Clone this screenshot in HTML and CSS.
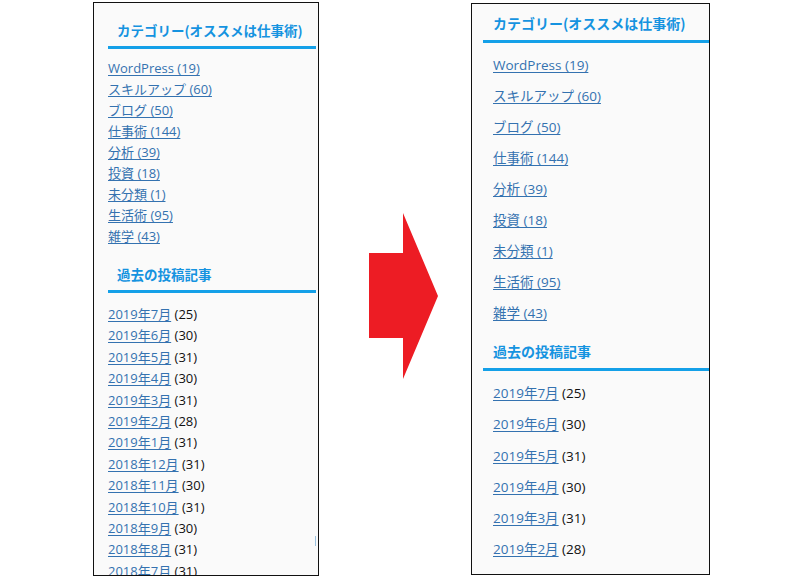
FILE: index.html
```html
<!DOCTYPE html>
<html lang="ja">
<head>
<meta charset="utf-8">
<link rel="stylesheet" href="styles.css">
</head>
<body>
<div class="stage">
  <aside class="panel panel-small">
    <h2 class="wtitle">カテゴリー(オススメは仕事術)</h2>
    <ul class="cats">
      <li><a href="#">WordPress (19)</a></li>
      <li><a href="#">スキルアップ (60)</a></li>
      <li><a href="#">ブログ (50)</a></li>
      <li><a href="#">仕事術 (144)</a></li>
      <li><a href="#">分析 (39)</a></li>
      <li><a href="#">投資 (18)</a></li>
      <li><a href="#">未分類 (1)</a></li>
      <li><a href="#">生活術 (95)</a></li>
      <li><a href="#">雑学 (43)</a></li>
    </ul>
    <h2 class="wtitle">過去の投稿記事</h2>
    <ul class="archives">
      <li><a href="#">2019年7月</a> (25)</li>
      <li><a href="#">2019年6月</a> (30)</li>
      <li><a href="#">2019年5月</a> (31)</li>
      <li><a href="#">2019年4月</a> (30)</li>
      <li><a href="#">2019年3月</a> (31)</li>
      <li><a href="#">2019年2月</a> (28)</li>
      <li><a href="#">2019年1月</a> (31)</li>
      <li><a href="#">2018年12月</a> (31)</li>
      <li><a href="#">2018年11月</a> (30)</li>
      <li><a href="#">2018年10月</a> (31)</li>
      <li><a href="#">2018年9月</a> (30)</li>
      <li><a href="#">2018年8月</a> (31)</li>
      <li><a href="#">2018年7月</a> (31)</li>
    </ul>
    <span class="scrollmark"></span>
  </aside>

  <svg class="arrow" width="70" height="168" viewBox="369 212 70 168">
    <polygon points="369,253 403,253 403,213 438,296 403,379 403,338 369,338" fill="#ed1c24"/>
  </svg>

  <aside class="panel panel-large">
    <h2 class="wtitle">カテゴリー(オススメは仕事術)</h2>
    <ul class="cats">
      <li><a href="#">WordPress (19)</a></li>
      <li><a href="#">スキルアップ (60)</a></li>
      <li><a href="#">ブログ (50)</a></li>
      <li><a href="#">仕事術 (144)</a></li>
      <li><a href="#">分析 (39)</a></li>
      <li><a href="#">投資 (18)</a></li>
      <li><a href="#">未分類 (1)</a></li>
      <li><a href="#">生活術 (95)</a></li>
      <li><a href="#">雑学 (43)</a></li>
    </ul>
    <h2 class="wtitle">過去の投稿記事</h2>
    <ul class="archives">
      <li><a href="#">2019年7月</a> (25)</li>
      <li><a href="#">2019年6月</a> (30)</li>
      <li><a href="#">2019年5月</a> (31)</li>
      <li><a href="#">2019年4月</a> (30)</li>
      <li><a href="#">2019年3月</a> (31)</li>
      <li><a href="#">2019年2月</a> (28)</li>
    </ul>
  </aside>
</div>
</body>
</html>
```

FILE: styles.css
```css
html, body {
  margin: 0;
  padding: 0;
  background: #ffffff;
}

body {
  width: 810px;
  height: 576px;
  overflow: hidden;
  font-family: "Open Sans", "Noto Sans CJK JP", sans-serif;
  color: #111111;
}

.stage {
  display: flex;
  align-items: flex-start;
}

.panel {
  position: relative;
  box-sizing: border-box;
  background: #fafafa;
  border: 1px solid #111;
  overflow: hidden;
}

.wtitle {
  margin: 0;
  font-family: "Noto Sans CJK JP", sans-serif;
  font-weight: 700;
  color: #1593e0;
  border-bottom: 3px solid #14a0e8;
  white-space: nowrap;
}

ul {
  list-style: none;
  margin: 0;
  padding: 0;
}

li {
  white-space: nowrap;
}

a {
  color: #3472b0;
  text-decoration: underline;
  text-underline-offset: 2px;
}

.cats a,
.archives a {
  font-family: "Open Sans", "Noto Sans CJK JP", sans-serif;
}

/* ---------- left (small) panel ---------- */
.panel-small {
  width: 226px;
  height: 574px;
  margin: 2px 0 0 93px;
  padding: 17px 2px 0 14px;
  font-size: 13px;
}

.panel-small .wtitle {
  font-size: 13.5px;
  line-height: 20px;
  padding: 0 0 6px 9px;
}

.panel-small .cats {
  margin-top: 9px;
  line-height: 21px;
}

.panel-small .cats + .wtitle {
  margin-top: 17px;
}

.panel-small .archives {
  margin-top: 11px;
  line-height: 21.4px;
}

.scrollmark {
  position: absolute;
  left: 221px;
  top: 533px;
  width: 1px;
  height: 10px;
  background: #9cc3e0;
}

/* ---------- arrow ---------- */
.arrow {
  display: block;
  margin: 212px 0 0 50px;
  flex: none;
}

/* ---------- right (large) panel ---------- */
.panel-large {
  width: 239px;
  height: 572px;
  margin: 3px 0 0 32px;
  padding: 9px 0 0 11px;
  font-size: 13.5px;
}

.panel-large .wtitle {
  font-size: 14px;
  line-height: 20px;
  padding: 0 0 7px 10px;
}

.panel-large .cats,
.panel-large .archives {
  padding-left: 10px;
}

.panel-large .cats {
  margin-top: 7px;
  line-height: 31px;
}

.panel-large .cats + .wtitle {
  margin-top: 12px;
}

.panel-large .archives {
  margin-top: 7px;
  line-height: 31.3px;
}
```
